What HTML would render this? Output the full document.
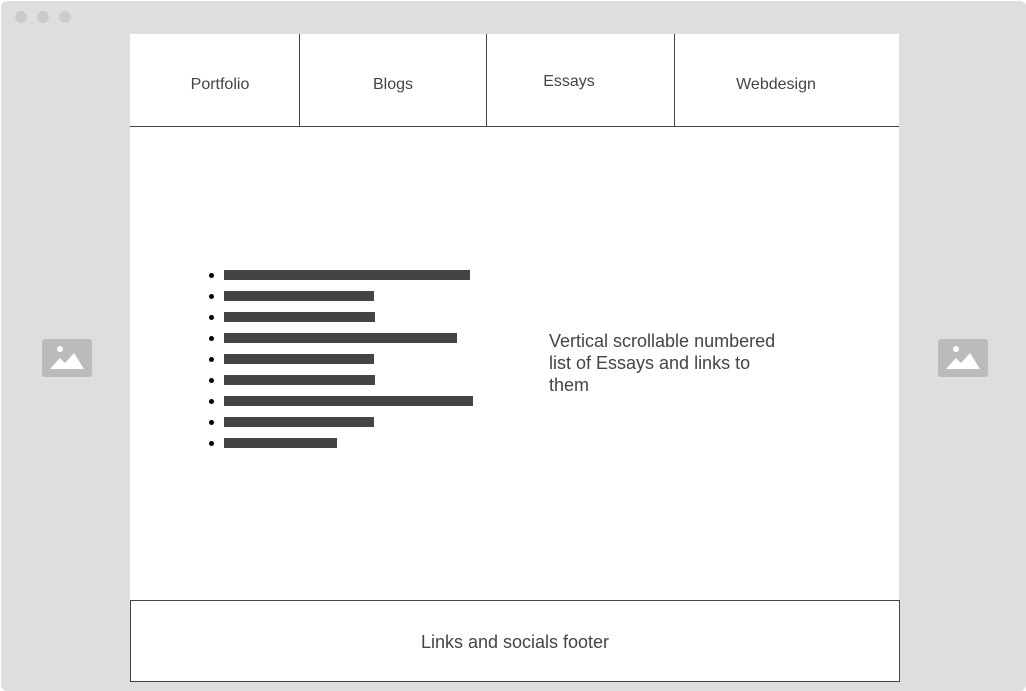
<!DOCTYPE html><html><head><style>
body{margin:0;width:1026px;height:682px;background:#fff;font-family:"Liberation Sans",sans-serif;color:#333;position:relative;overflow:hidden}
.win{position:absolute;left:1px;top:1px;width:1025px;height:690px;background:#dedede;border-radius:6px}
.dot{position:absolute;top:11px;width:12px;height:12px;border-radius:50%;background:#ccc}
.main{position:absolute;left:130px;top:34px;width:769px;height:648px;background:#fff}
.nav{position:absolute;top:34px;height:92px;border-bottom:1px solid #444}
.v{position:absolute;top:34px;width:1px;height:92px;background:#444}
.t{position:absolute;text-align:center;font-size:16px;color:#444}
.bar{position:absolute;left:224px;height:10px;background:#444}
.b{position:absolute;left:209px;width:5px;height:5px;border-radius:50%;background:#000}
</style></head><body>
<div class="win"></div>
<div class="dot" style="left:15px"></div><div class="dot" style="left:37px"></div><div class="dot" style="left:59px"></div>
<div class="main"></div>
<div class="nav" style="left:130px;width:769px"></div>
<div class="t" style="left:140px;top:76px;width:160px">Portfolio</div>
<div class="t" style="left:300px;top:76px;width:186px">Blogs</div>
<div class="t" style="left:487px;top:73px;width:164px">Essays</div>
<div class="t" style="left:675px;top:76px;width:202px">Webdesign</div>
<div class="v" style="left:299px"></div><div class="v" style="left:486px"></div><div class="v" style="left:674px"></div>
<div class="b" style="top:273px"></div><div class="bar" style="top:270px;width:246px"></div>
<div class="b" style="top:294px"></div><div class="bar" style="top:291px;width:150px"></div>
<div class="b" style="top:315px"></div><div class="bar" style="top:312px;width:151px"></div>
<div class="b" style="top:336px"></div><div class="bar" style="top:333px;width:233px"></div>
<div class="b" style="top:357px"></div><div class="bar" style="top:354px;width:150px"></div>
<div class="b" style="top:378px"></div><div class="bar" style="top:375px;width:151px"></div>
<div class="b" style="top:399px"></div><div class="bar" style="top:396px;width:249px"></div>
<div class="b" style="top:420px"></div><div class="bar" style="top:417px;width:150px"></div>
<div class="b" style="top:441px"></div><div class="bar" style="top:438px;width:113px"></div>
<div style="position:absolute;left:549px;top:330px;width:245px;font-size:18px;line-height:22px;color:#444">Vertical scrollable numbered list of Essays and links to them</div>
<div style="position:absolute;left:130px;top:600px;width:768px;height:80px;border:1px solid #444"></div>
<div style="position:absolute;left:130px;top:632px;width:770px;text-align:center;font-size:18px;color:#444">Links and socials footer</div>
<svg style="position:absolute;left:42px;top:339px" width="50" height="39"><rect width="50" height="38" rx="3" fill="#bbb"/><circle cx="18" cy="10" r="3" fill="#fff"/><path d="M8 30 L18 19 L23 24 L32 14 L42 30 Z" fill="#fff"/></svg>
<svg style="position:absolute;left:938px;top:339px" width="50" height="39"><rect width="50" height="38" rx="3" fill="#bbb"/><circle cx="18" cy="10" r="3" fill="#fff"/><path d="M8 30 L18 19 L23 24 L32 14 L42 30 Z" fill="#fff"/></svg>
</body></html>
